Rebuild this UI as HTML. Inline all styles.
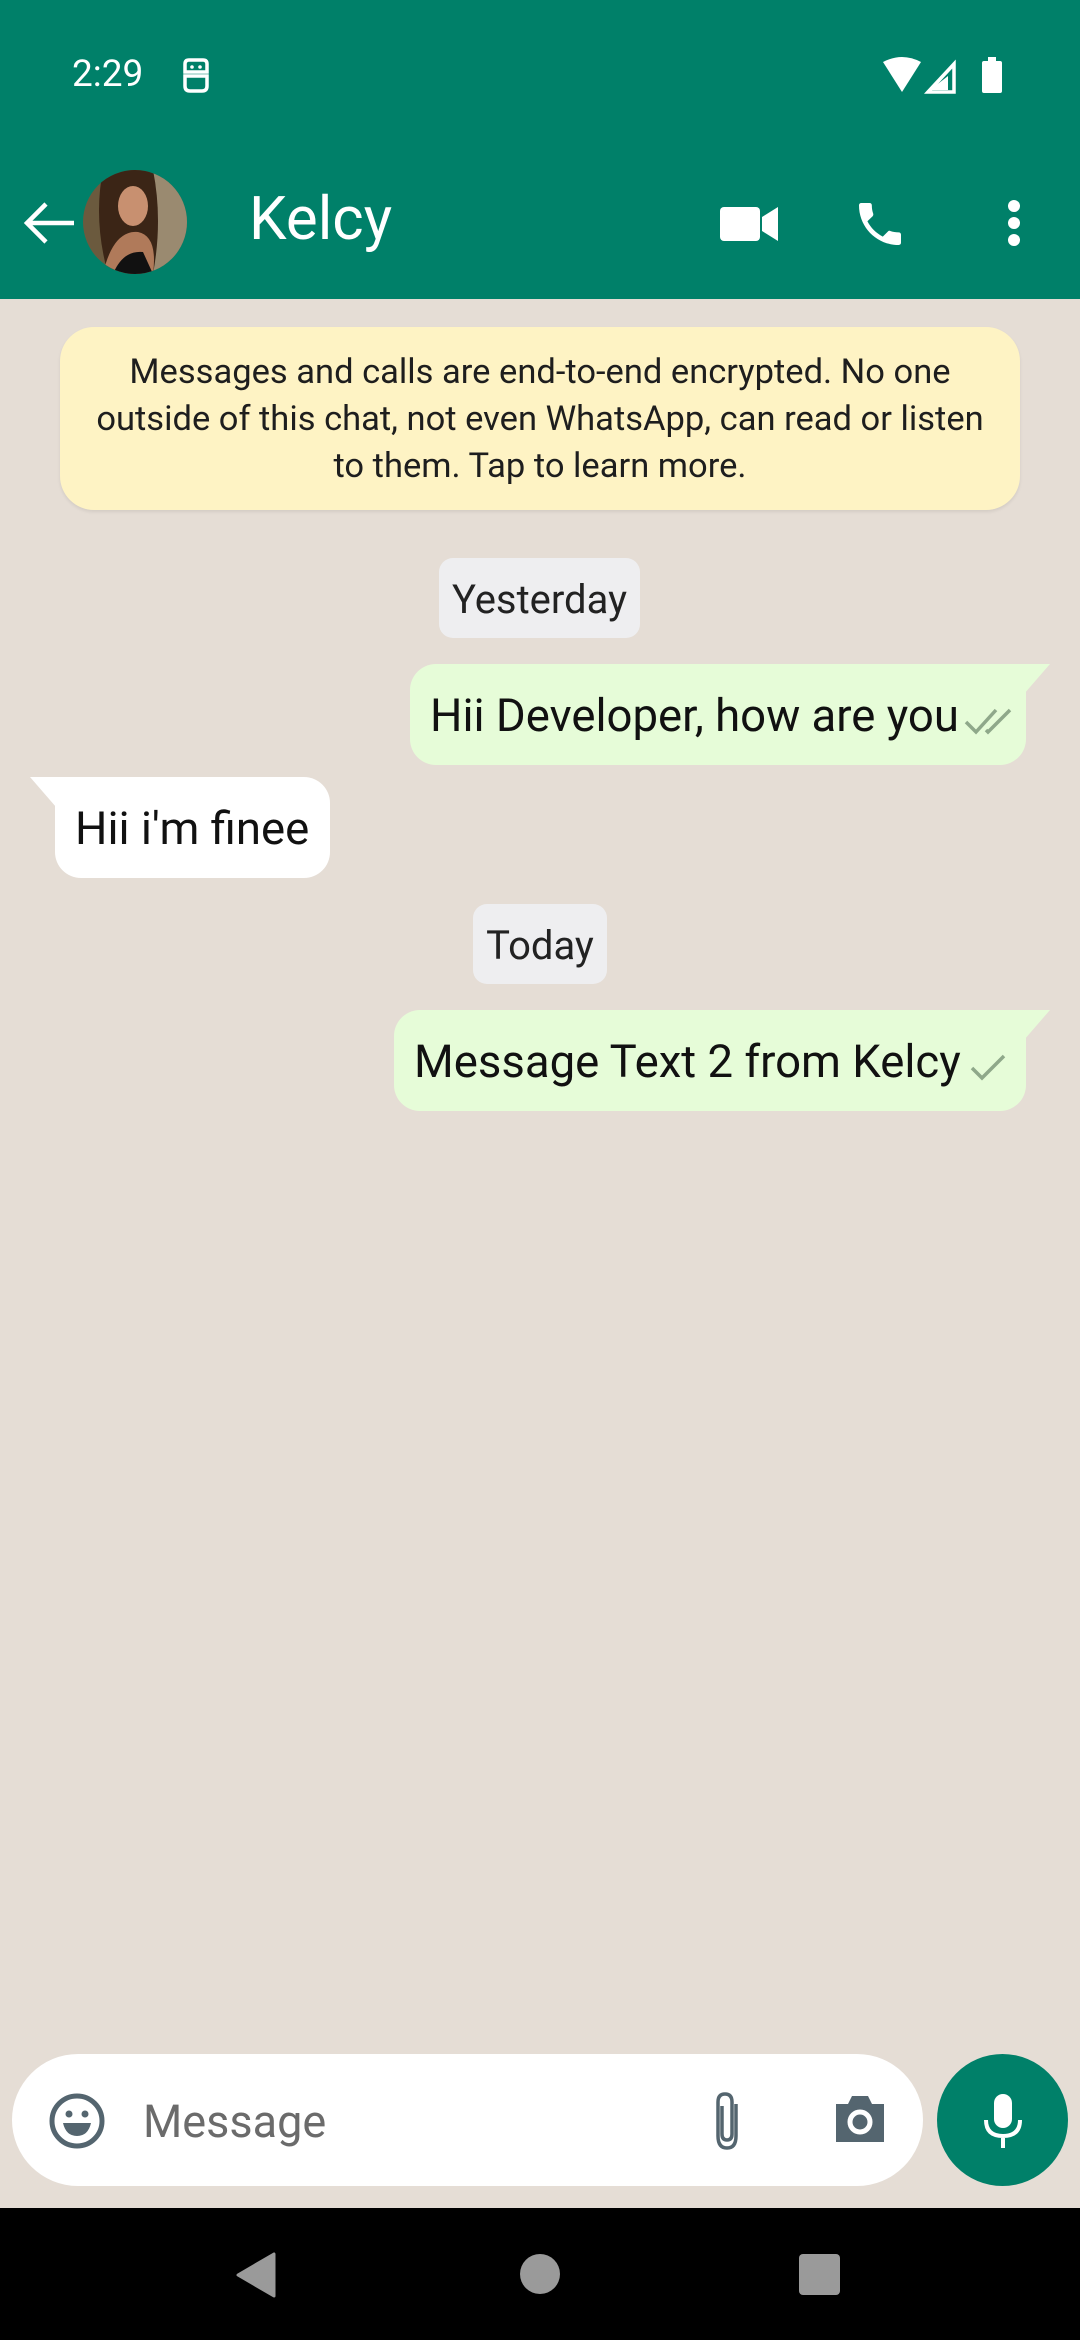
<!DOCTYPE html>
<html><head><meta charset="utf-8">
<style>
*{margin:0;padding:0;box-sizing:border-box}
body{width:1080px;height:2340px;overflow:hidden;position:relative;background:#e5ddd5;font-family:"Roboto","Liberation Sans",sans-serif;}
.abs{position:absolute}
.hdr{left:0;top:0;width:1080px;height:299px;background:#008069}
.t{color:#fff;font-size:37px;left:72px;top:53px}
.name{color:#fff;font-size:60px;left:249px;top:183px}
.enc{left:60px;top:327px;width:960px;height:183px;background:#fef3c4;border-radius:34px;text-align:center;font-size:34.5px;line-height:47px;color:#1e1e1e;padding-top:22px;box-shadow:0 2px 3px rgba(0,0,0,.08);white-space:nowrap}
.chip{background:#eeeef0;border-radius:14px;font-size:40px;color:#222;text-align:center;line-height:84px;height:80px}
.b{font-size:45.5px;color:#111;height:101px;line-height:106px;border-radius:26px;white-space:nowrap}
.out{background:#e6fcd8;border-top-right-radius:0}
.in{background:#fff;border-top-left-radius:0}
</style></head><body>
<div class="abs hdr"></div>
<div class="abs t">2:29</div>
<svg class="abs" style="left:180px;top:58px" width="32" height="36" viewBox="0 0 32 36"><path d="M5 6 Q5 2 9 2 H23 Q27 2 27 6 V14 H5 Z M5 18 H27 V28 Q27 33 22 33 H10 Q5 33 5 28 Z" fill="none" stroke="#fff" stroke-width="3.5"/><circle cx="12" cy="9" r="1.8" fill="#fff"/><circle cx="20" cy="9" r="1.8" fill="#fff"/></svg>
<svg class="abs" style="left:880px;top:56px" width="130" height="38" viewBox="0 0 130 38"><path d="M3 6 Q22 -4 41 6 L22 36 Z" fill="#fff"/><path d="M48 36 L74 8 V36 Z" fill="none" stroke="#fff" stroke-width="3.5"/><path d="M68 20 V34 H50" fill="#fff"/><rect x="102" y="5" width="20" height="32" rx="2" fill="#fff"/><rect x="108" y="1" width="8" height="5" fill="#fff"/></svg>
<svg class="abs" style="left:22px;top:200px" width="56" height="46" viewBox="0 0 56 46"><path d="M52 23 H6 M24 4 L5 23 L24 42" fill="none" stroke="#fff" stroke-width="4.5"/></svg>
<svg class="abs" style="left:83px;top:170px" width="104" height="104" viewBox="0 0 104 104"><defs><clipPath id="c"><circle cx="52" cy="52" r="52"/></clipPath></defs><g clip-path="url(#c)"><rect width="104" height="104" fill="#6b5a3e"/><rect x="70" width="34" height="104" fill="#9a8a70"/><path d="M20 0 Q10 50 25 104 H70 Q80 50 70 0 Z" fill="#3b2516"/><ellipse cx="50" cy="36" rx="15" ry="20" fill="#c89070"/><path d="M20 104 Q30 60 55 62 Q75 66 70 104 Z" fill="#b07a5a"/><path d="M30 104 Q40 80 60 82 L70 104 Z" fill="#111"/></g></svg>
<div class="abs name">Kelcy</div>
<svg class="abs" style="left:720px;top:205px" width="60" height="38" viewBox="0 0 60 38"><rect x="0" y="2" width="40" height="34" rx="4" fill="#fff"/><path d="M42 12 L58 2 V36 L42 26 Z" fill="#fff"/></svg>
<svg class="abs" style="left:852px;top:196px" width="56" height="56" viewBox="0 0 24 24"><path fill="#fff" d="M6.6 10.8c1.4 2.8 3.8 5.1 6.6 6.6l2.2-2.2c.3-.3.7-.4 1-.2 1.1.4 2.300.6 3.6.6.6 0 1 .4 1 1V20c0 .6-.4 1-1 1C10.6 21 3 13.4 3 4c0-.6.4-1 1-1h3.5c.6 0 1 .4 1 1 0 1.3.2 2.5.6 3.6.1.3 0 .7-.2 1L6.6 10.8z"/></svg>
<svg class="abs" style="left:1004px;top:198px" width="20" height="50" viewBox="0 0 20 50"><circle cx="10" cy="8" r="6" fill="#fff"/><circle cx="10" cy="25" r="6" fill="#fff"/><circle cx="10" cy="42" r="6" fill="#fff"/></svg>

<div class="abs enc">Messages and calls are end-to-end encrypted. No one<br>outside of this chat, not even WhatsApp, can read or listen<br>to them. Tap to learn more.</div>

<div class="abs chip" style="left:439px;top:558px;width:201px">Yesterday</div>
<div class="abs b out" style="left:410px;top:664px;width:616px;padding-left:20px">Hii Developer, how are you</div>
<svg class="abs" style="left:1024px;top:664px" width="26" height="30"><path d="M0 0 H26 L0 30 Z" fill="#e6fcd8"/></svg>
<svg class="abs" style="left:964px;top:706px" width="52" height="30" viewBox="0 0 52 30"><path d="M2 16 L12 26 L32 4 M22 24 L24 26 L46 4" fill="none" stroke="#8fa88a" stroke-width="3.5"/></svg>

<div class="abs b in" style="left:55px;top:777px;width:275px;padding-left:20px">Hii i'm finee</div>
<svg class="abs" style="left:30px;top:777px" width="26" height="30"><path d="M0 0 H26 V30 Z" fill="#fff"/></svg>

<div class="abs chip" style="left:473px;top:904px;width:134px">Today</div>
<div class="abs b out" style="left:394px;top:1010px;width:632px;padding-left:20px">Message Text 2 from Kelcy</div>
<svg class="abs" style="left:1024px;top:1010px" width="26" height="30"><path d="M0 0 H26 L0 30 Z" fill="#e6fcd8"/></svg>
<svg class="abs" style="left:968px;top:1052px" width="40" height="30" viewBox="0 0 40 30"><path d="M4 16 L14 26 L36 4" fill="none" stroke="#8fa88a" stroke-width="3.5"/></svg>

<div class="abs" style="left:12px;top:2054px;width:911px;height:132px;background:#fff;border-radius:66px"></div>
<svg class="abs" style="left:48px;top:2092px" width="58" height="58" viewBox="0 0 58 58"><circle cx="29" cy="29" r="25" fill="none" stroke="#54656f" stroke-width="5"/><circle cx="21" cy="22" r="3.5" fill="#54656f"/><circle cx="37" cy="22" r="3.5" fill="#54656f"/><path d="M15 31 H43 Q40 44 29 44 Q18 44 15 31 Z" fill="#54656f"/></svg>
<div class="abs" style="left:143px;top:2095px;font-size:45px;color:#6b6b6b">Message</div>
<svg class="abs" style="left:710px;top:2090px" width="34" height="62" viewBox="0 0 34 62"><path d="M26 14 V46 Q26 58 17 58 Q8 58 8 46 V12 Q8 4 15 4 Q22 4 22 12 V44 Q22 50 17 50 Q12 50 12 44 V16" fill="none" stroke="#54656f" stroke-width="3.5"/></svg>
<svg class="abs" style="left:832px;top:2092px" width="56" height="52" viewBox="0 0 56 52"><path d="M4 12 H16 L20 4 H36 L40 12 H52 V50 H4 Z" fill="#54656f"/><circle cx="28" cy="30" r="10" fill="none" stroke="#fff" stroke-width="5"/></svg>
<div class="abs" style="left:937px;top:2054px;width:131px;height:132px;border-radius:50%;background:#008069"></div>
<svg class="abs" style="left:982px;top:2092px" width="42" height="58" viewBox="0 0 42 58"><rect x="12" y="2" width="18" height="34" rx="9" fill="#fff"/><path d="M4 28 Q4 44 21 44 Q38 44 38 28 M21 44 V56" fill="none" stroke="#fff" stroke-width="4"/></svg>

<div class="abs" style="left:0;top:2208px;width:1080px;height:132px;background:#000"></div>
<svg class="abs" style="left:236px;top:2252px" width="40" height="46" viewBox="0 0 40 46"><path d="M38 2 V44 L2 23 Z" fill="#9a9a9a" stroke="#9a9a9a" stroke-width="3" stroke-linejoin="round"/></svg>
<div class="abs" style="left:520px;top:2254px;width:40px;height:40px;border-radius:50%;background:#9a9a9a"></div>
<div class="abs" style="left:799px;top:2254px;width:41px;height:41px;border-radius:4px;background:#9a9a9a"></div>
</body></html>
